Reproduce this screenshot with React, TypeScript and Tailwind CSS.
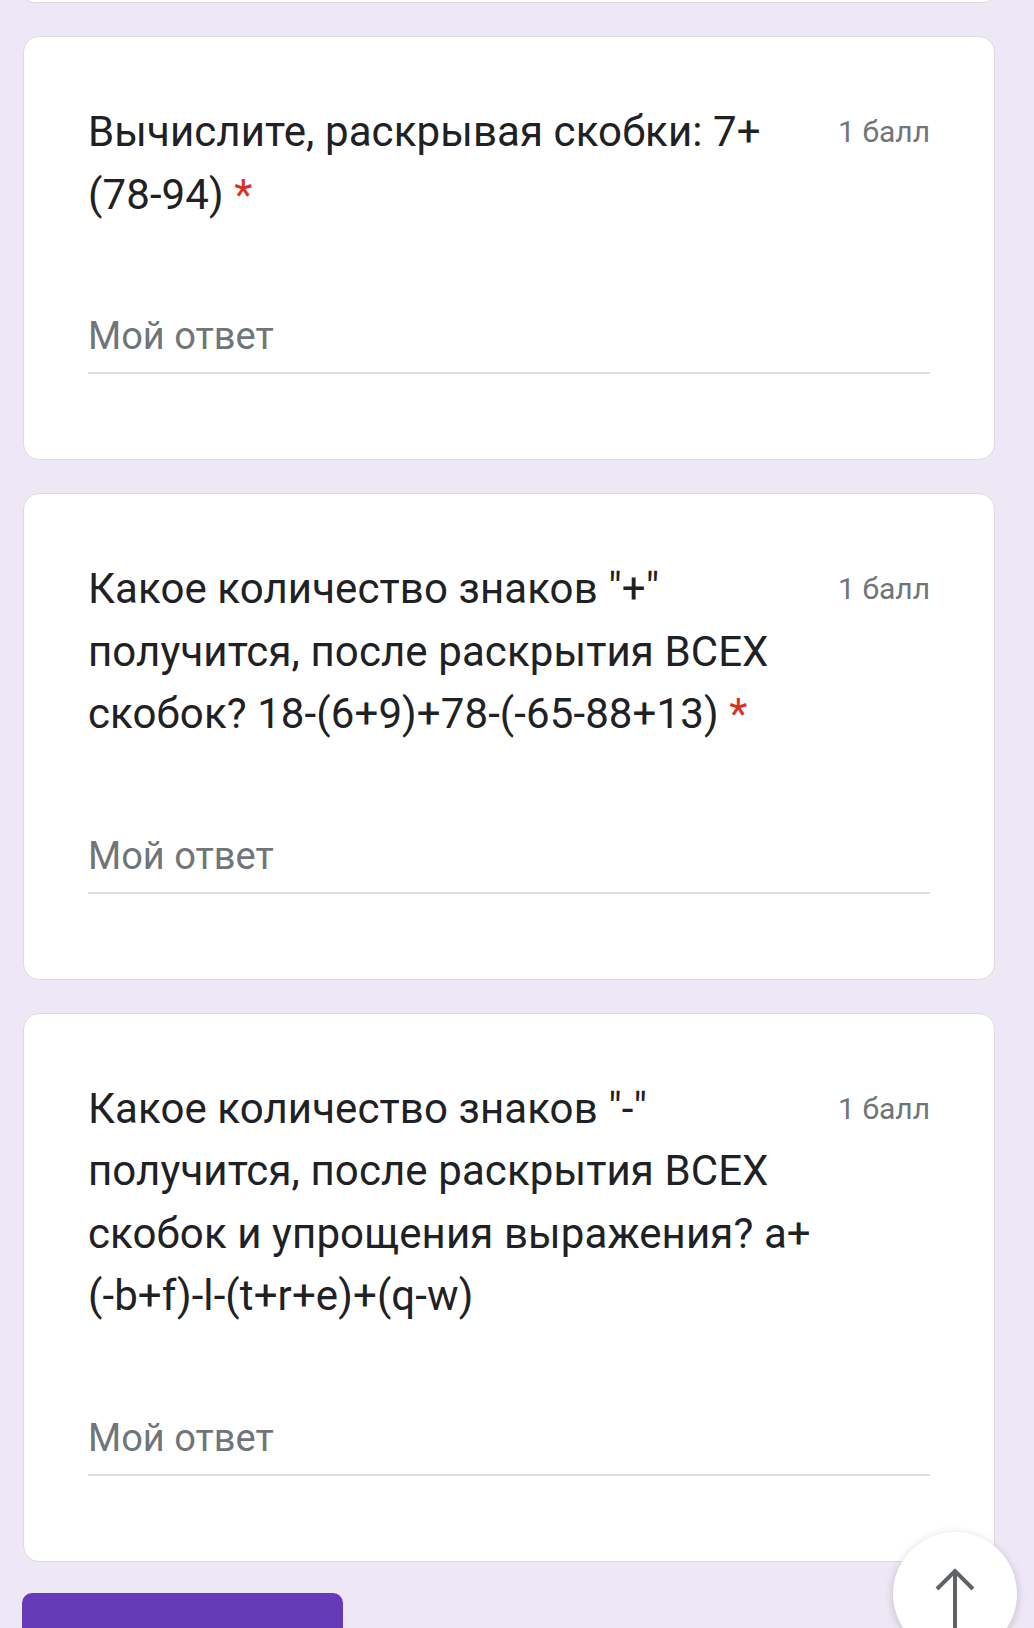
import React from "react";

type Question = {
  id: number;
  lines: string[];
  required: boolean;
};

const questions: Question[] = [
  {
    id: 1,
    lines: ["Вычислите, раскрывая скобки: 7+", "(78-94)"],
    required: true,
  },
  {
    id: 2,
    lines: ['Какое количество знаков "+"', "получится, после раскрытия ВСЕХ", "скобок? 18-(6+9)+78-(-65-88+13)"],
    required: true,
  },
  {
    id: 3,
    lines: [
      'Какое количество знаков "-"',
      "получится, после раскрытия ВСЕХ",
      "скобок и упрощения выражения? a+",
      "(-b+f)-l-(t+r+e)+(q-w)",
    ],
    required: false,
  },
];

const QuestionCard = ({ q }: { q: Question }) => (
  <div className="ml-[23px] mr-[39px] mt-[33px] bg-white border border-[#dadce0] rounded-[16px] pt-[64px] pb-[85px] px-[64px]">
    <div className="flex justify-between items-start">
      <h2 className="text-[42px] leading-[62.5px] text-[#202124] font-normal tracking-[0.1px]">
        {q.lines.map((line, i) => (
          <React.Fragment key={i}>
            {line}
            {i === q.lines.length - 1 && q.required && <span className="text-[#d93025]"> *</span>}
            {i < q.lines.length - 1 && <br />}
          </React.Fragment>
        ))}
      </h2>
      <span className="text-[30px] leading-[62px] text-[#70757a] whitespace-nowrap">1 балл</span>
    </div>
    <div className="mt-[86px] pb-[12px] border-b-2 border-[#e0e0e0]">
      <div className="text-[38px] leading-[48px] text-[#70757a]">Мой ответ</div>
    </div>
  </div>
);

export default function App() {
  return (
    <div className="relative h-[1628px] overflow-hidden bg-[#ede7f6] font-['Roboto',sans-serif]">
      {/* tail of the previous card */}
      <div className="ml-[23px] mr-[39px] -mt-[20px] h-[23px] bg-white border border-[#dadce0] rounded-[16px]" />

      {questions.map((q) => (
        <QuestionCard key={q.id} q={q} />
      ))}

      <div className="mt-[31px] ml-[22px] w-[321px] h-[120px] rounded-[10px] bg-[#673ab7] pl-[66px] pt-[26px]">
        <span className="text-[36px] leading-[48px] text-white font-medium">Отправить</span>
      </div>

      <button className="absolute left-[893px] top-[1532px] w-[124px] h-[124px] rounded-full bg-white shadow-[0_2px_10px_rgba(0,0,0,0.18)] flex items-start justify-center">
        <svg width="44" height="80" viewBox="0 0 44 80" className="mt-[36px]" fill="none" stroke="#5f6368" strokeWidth="4">
          <path d="M22 4 V80" />
          <path d="M4 21 L22 3 L40 21" />
        </svg>
      </button>
    </div>
  );
}
